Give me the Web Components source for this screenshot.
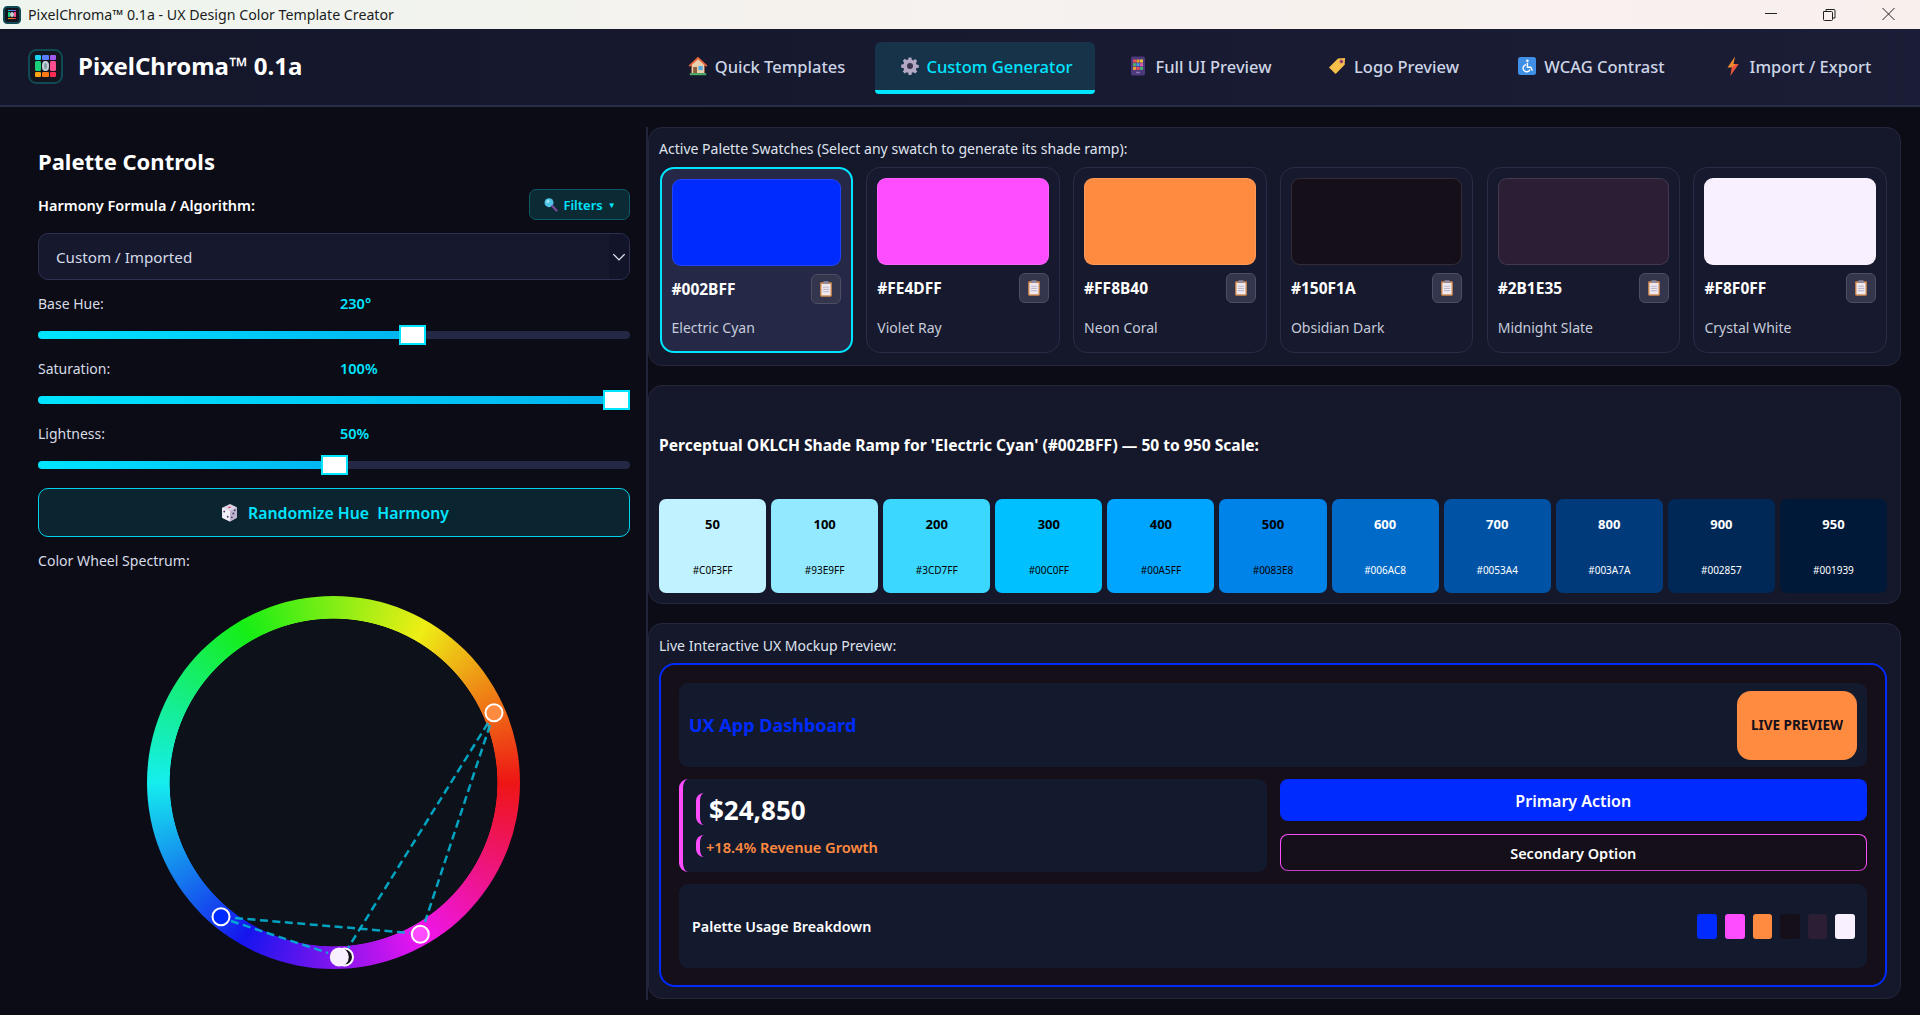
<!DOCTYPE html>
<html lang="en">
<head>
<meta charset="utf-8">
<title>PixelChroma 0.1a</title>
<style>
  html, body { margin: 0; height: 100%; background: #0b0c16; }
  body { font-family: "Noto Sans", "Open Sans", sans-serif; color: #fff; overflow: hidden; }
</style>
</head>
<body>
<pc-app></pc-app>
<script>
/** Inline SVG bodies for the small glyphs, all on a 20x20 box. */
const ICONS = {
  house: `<path d="M10 .8 .6 9.600l1.100 1.100L3.500 9.200V17.200h13V9.200l1.800 1.500 1.100-1.100z" fill="#e8663c"/><path d="M3.800 9 10 3.200 16.200 9v8.200H3.800z" fill="#e9cfae"/><rect x="5.200" y="11" width="3.800" height="6.200" fill="#8a5a3a"/><rect x="10.500" y="10" width="4.200" height="4.200" fill="#4fa8e0"/><rect x="1.800" y="17.200" width="16.400" height="2" fill="#46b36c"/>`,
  gear: `<path d="M8.600 1.500h2.800l.4 2.300 1.500.6 1.900-1.300 2 2-1.300 1.900.6 1.500 2.300.4v2.800l-2.300.4-.6 1.500 1.300 1.900-2 2-1.900-1.300-1.500.6-.4 2.300H8.600l-.4-2.300-1.500-.6-1.900 1.300-2-2 1.300-1.900-.6-1.500-2.300-.4V8.600l2.300-.4.6-1.500-1.300-1.900 2-2 1.900 1.300 1.500-.6z" fill="#b3a9c4"/><circle cx="10" cy="10" r="3" fill="#3a3550"/>`,
  phone: `<rect x="3" y=".5" width="14" height="19" rx="2" fill="#4c3a7c"/><g><rect x="5" y="3.500" width="3" height="3" fill="#ee4d5a"/><rect x="8.500" y="3.500" width="3" height="3" fill="#f0a030"/><rect x="12" y="3.500" width="3" height="3" fill="#e8c838"/><rect x="5" y="7.200" width="3" height="3" fill="#4caf6a"/><rect x="8.500" y="7.200" width="3" height="3" fill="#4898e8"/><rect x="12" y="7.200" width="3" height="3" fill="#d860b0"/><rect x="5" y="10.900" width="3" height="3" fill="#f0a030"/><rect x="8.500" y="10.900" width="3" height="3" fill="#ee4d5a"/><rect x="12" y="10.900" width="3" height="3" fill="#4caf6a"/></g><rect x="8" y="15.700" width="4" height="1.500" rx=".7" fill="#8c7cb8"/>`,
  tag: `<path d="M11 2.500 18 2l-.3 6.800L8.600 18 2 11.400z" fill="#f5c04a"/><circle cx="14.400" cy="5.400" r="2" fill="#d0607c"/><circle cx="14.400" cy="5.400" r="1" fill="#44365c"/>`,
  access: `<rect x="1" y="1" width="18" height="18" rx="2.500" fill="#3f8fe6"/><circle cx="10.400" cy="4.800" r="1.300" fill="#fff"/><path d="M10.400 6.800v4.400h3.400l1.600 3.400M9 8.600a3.600 3.600 0 1 0 4 5" fill="none" stroke="#fff" stroke-width="1.400"/>`,
  bolt: `<path d="M12 .5 4.500 11.500h4.500L7.500 19.500 15.500 8h-5z" fill="#f08a32"/><path d="M9 11.500 7.500 19.500 15.500 8h-2.500z" fill="#ef5040"/>`,
  search: `<circle cx="8" cy="7.500" r="6" fill="#4fc3e8"/><circle cx="6.500" cy="5.800" r="2" fill="#a4e6f8"/><path d="m12.500 12 5.500 6" stroke="#7a4a9c" stroke-width="3" stroke-linecap="round"/>`,
  dice: `<path d="M3 5.500 10.500 2 17 5v10l-6.500 3.500L3 15z" fill="#dcd4e6"/><path d="M3 5.500 10.500 8.500V18.500L3 15z" fill="#f3eff7"/><path d="M10.500 8.500 17 5v10l-6.500 3.500z" fill="#bdb3cc"/><ellipse cx="10" cy="5" rx="1.300" ry=".8" fill="#e04860"/><circle cx="5" cy="9" r=".9" fill="#4a3d70"/><circle cx="8.300" cy="14" r=".9" fill="#4a3d70"/><circle cx="15" cy="7.800" r=".9" fill="#4a3d70"/><circle cx="13.600" cy="11" r=".9" fill="#4a3d70"/><circle cx="12.200" cy="14.600" r=".9" fill="#4a3d70"/>`,
  clip: `<rect x="3.500" y="2.500" width="13" height="16" rx="1.200" fill="#d08a4e"/><rect x="5" y="4.500" width="10" height="12.500" fill="#efeaf2"/><rect x="7" y="1.500" width="6" height="3" rx=".8" fill="#8f8a9c"/><path d="M6.500 8h7M6.500 10.500h7M6.500 13h7" stroke="#b4aec0" stroke-width="1"/>`,
};

/**
 * Register a custom element whose shadow root is a fixed piece of markup.
 *
 * @param {string} tag - Custom element tag name.
 * @param {(el: HTMLElement) => string} html - Returns the shadow markup.
 */
function define(tag, html) {
  customElements.define(tag, class extends HTMLElement {
    connectedCallback() {
      if (this.shadowRoot) return;
      this.attachShadow({ mode: 'open' }).innerHTML = html(this);
    }
  });
}

define('pc-icon', el => {
  const size = el.getAttribute('size') || 20;
  return `<style>:host{display:inline-flex;flex:none}svg{display:block}</style>
  <svg width="${size}" height="${size}" viewBox="0 0 20 20">${ICONS[el.getAttribute('name')]}</svg>`;
});

define('pc-logo', el => {
  const size = el.getAttribute('size');
  const cells = ['#19d5f0', '#5b7dff', '#a45cf0', '#19d27a', '', '#ff4d8d', '#ffa414', '#ff7a14', '#ff2d55'];
  return `<style>
    :host{display:block;width:${size}px;height:${size}px;flex:none}
    .box{box-sizing:border-box;width:100%;height:100%;padding:14%;border-radius:24%;background:#15151f;border:2px solid #0f4a55;display:grid;grid-template-columns:repeat(3,1fr);gap:5%}
    i{border-radius:18%;display:block}
    .mid{background:#8aa0a8;border:2px solid #c4d2d8;box-sizing:border-box;border-radius:50%}
  </style>
  <div class="box">${cells.map(c => c ? `<i style="background:${c}"></i>` : '<i class="mid"></i>').join('')}</div>`;
});

define('pc-titlebar', () => `<style>
  :host{display:flex;align-items:center;height:29px;flex:none;background:linear-gradient(90deg,#eef5ee,#f5f2ee 40%,#f9f0ee);color:#1c1c1c;font:14.2px/29px "Noto Sans",sans-serif}
  pc-logo{margin:0 7px 0 3px}
  .ctl{margin-left:auto;display:flex}
  .ctl svg{display:block;width:58px;height:29px}
</style>
<pc-logo size="18"></pc-logo><span>PixelChroma™ 0.1a - UX Design Color Template Creator</span>
<div class="ctl">
  <svg viewBox="0 0 58 29"><path d="M19 13.500h12" stroke="#222" fill="none"/></svg>
  <svg viewBox="0 0 58 29"><path d="M19.500 11.500h8a1 1 0 0 1 1 1v7a1 1 0 0 1-1 1h-7a1 1 0 0 1-1-1zM22 11V9.500h8a1 1 0 0 1 1 1V18h-2" stroke="#222" fill="none"/></svg>
  <svg viewBox="0 0 58 29"><path d="M20.500 8l12 12m0-12-12 12" stroke="#222" fill="none"/></svg>
</div>`);

define('pc-tab', el => `<style>
  :host{display:flex;align-items:center;justify-content:center;gap:7px;width:${el.getAttribute('width')}px;height:52px;box-sizing:border-box;padding-bottom:4px;border-radius:6px 6px 4px 4px;font-size:16.5px;font-weight:500;color:#cdd5e6}
  :host([active]){background:#16334a;color:#00e5ff;border-bottom:4px solid #00e5ff;padding:0 0 0 2px}
</style><pc-icon name="${el.getAttribute('icon')}"></pc-icon><slot></slot>`);

define('pc-header', () => `<style>
  :host{display:flex;align-items:center;height:78px;flex:none;box-sizing:border-box;padding:0 27px 2px 28px;background:linear-gradient(90deg,#14162a,#1a1d35);border-bottom:2px solid #2a2b47}
  h1{margin:0 0 0 15px;font-size:24px;line-height:32px;font-weight:700}
  nav{margin:4px 0 0 auto;display:flex}
</style>
<pc-logo size="35"></pc-logo><h1>PixelChroma™ 0.1a</h1>
<nav>
  <pc-tab icon="house" width="217">Quick Templates</pc-tab>
  <pc-tab icon="gear" width="220" active>Custom Generator</pc-tab>
  <pc-tab icon="phone" width="210">Full UI Preview</pc-tab>
  <pc-tab icon="tag" width="176">Logo Preview</pc-tab>
  <pc-tab icon="access" width="220">WCAG Contrast</pc-tab>
  <pc-tab icon="bolt" width="192">Import / Export</pc-tab>
</nav>`);

define('pc-slider', el => {
  const v = el.getAttribute('fraction');
  return `<style>
    :host{display:block;margin-top:14px}
    .top{display:grid;grid-template-columns:302px 1fr;font-size:14px;line-height:20px;color:#d7dbe6}
    b{color:#00e5ff;font-weight:600;font-size:14.5px;margin-top:-1px}
    .row{display:flex;align-items:center;height:20px;margin-top:11px}
    .fill,.rest{height:8px}
    .fill{flex:${v} 1 0;background:linear-gradient(90deg,#00e5ff,#00b6f1);border-radius:4px 0 0 4px}
    .rest{flex:${1 - v} 1 0;background:#252845;border-radius:0 4px 4px 0}
    .thumb{flex:none;box-sizing:border-box;width:27px;height:20px;background:#fff;border:2px solid #00e5ff}
  </style>
  <div class="top"><span><slot></slot></span><b>${el.getAttribute('value')}</b></div>
  <div class="row"><div class="fill"></div><div class="thumb"></div><div class="rest"></div></div>`;
});

define('pc-wheel', () => `<style>
  :host{display:block;position:relative;width:373px;height:373px;margin:25px 0 0 109px}
  .ring{width:100%;height:100%;border-radius:50%;background:radial-gradient(circle,#0d1119 0 163.5px,transparent 164.2px),conic-gradient(from 90deg,#ee1515,#ee15ee,#1515ee,#15eeee,#15ee15,#eeee15,#ee1515)}
  svg{position:absolute;inset:0}
</style>
<div class="ring"></div>
<svg width="373" height="373" viewBox="147 596 373 373">
  <g stroke="#00b4d4" stroke-opacity=".9" stroke-width="2.500" stroke-dasharray="8 4.500" fill="none">
    <path d="M235 918 410 933"/><path d="M231 921 328 953"/><path d="M488 723 348 948"/><path d="M490 725 425 922"/>
  </g>
  <g stroke="#fff" stroke-width="2">
    <circle cx="494" cy="712.700" r="8.500" fill="#FF8B40"/>
    <circle cx="420.300" cy="934.300" r="8.500" fill="#FE4DFF"/>
    <circle cx="221" cy="916.700" r="8.500" fill="#002BFF"/>
    <circle cx="344.500" cy="957" r="8.500" fill="#150F1A"/>
    <circle cx="339.300" cy="957" r="8.500" fill="#F8F0FF" stroke="#F8F0FF"/>
  </g>
</svg>`);

define('pc-controls', () => `<style>
  :host{display:block;box-sizing:border-box;width:648px;height:873px;padding:19px 16px 0 38px;border-right:2px solid #23253d}
  h2{margin:0 0 13px;font-size:22px;line-height:30px;font-weight:700}
  .harmony{display:flex;align-items:center;justify-content:space-between;height:31px;font-size:14.5px;font-weight:600}
  .filters{display:flex;align-items:center;gap:5px;box-sizing:border-box;width:101px;height:31px;justify-content:center;background:#0b2a33;border:1px solid #0d5a66;border-radius:7px;color:#00e5ff;font-size:13px;font-weight:600}
  .select{display:flex;align-items:center;box-sizing:border-box;height:47px;margin:13px 0 0;padding-left:17px;background:#16192e;border:1px solid #2e3050;border-radius:10px;font-size:15.2px;color:#d5dae8;position:relative;overflow:hidden}
  .select svg{margin-left:auto;background:#12142a;width:20px;height:100%}
  .random{display:flex;align-items:center;justify-content:center;gap:8px;box-sizing:border-box;height:49px;margin-top:13px;background:#0b2530;border:1.5px solid #00d4ec;border-radius:10px;color:#00e5ff;font-size:15.8px;font-weight:600;white-space:pre}
  .lbl{margin-top:14px;font-size:14.1px;line-height:20px;color:#d7dbe6}
</style>
<h2>Palette Controls</h2>
<div class="harmony"><span>Harmony Formula / Algorithm:</span>
  <div class="filters"><pc-icon name="search" size="15"></pc-icon><span>Filters</span><span style="font-size:8px">▼</span></div></div>
<div class="select"><span>Custom / Imported</span><svg viewBox="0 0 20 47"><path d="m4 21 6 6 6-6" fill="none" stroke="#e0e4ee" stroke-width="1.400"/></svg></div>
<pc-slider value="230°" fraction="0.639">Base Hue:</pc-slider>
<pc-slider value="100%" fraction="1">Saturation:</pc-slider>
<pc-slider value="50%" fraction="0.5">Lightness:</pc-slider>
<div class="random"><pc-icon name="dice" size="21"></pc-icon><span>Randomize Hue  Harmony</span></div>
<div class="lbl">Color Wheel Spectrum:</div>
<pc-wheel></pc-wheel>`);

define('pc-card', () => `<style>
  :host{display:block;box-sizing:border-box;padding:11px 13px 11px 10px;background:#15172a;border:1px solid #25263c;border-radius:14px}
</style><slot></slot>`);

define('pc-swatch', el => `<style>
  :host{display:block;box-sizing:border-box;height:186px;padding:10px;background:#171a2e;border:1px solid #2a2c47;border-radius:14px}
  :host([active]){background:#252947;border:2px solid #00e5ff}
  :host([active]) .name{margin-top:14px}
  .color{height:87px;box-sizing:border-box;border-radius:9px;border:1px solid rgba(255,255,255,.12)}
  .row{display:flex;align-items:center;justify-content:space-between;margin-top:8px;height:30px;font-size:15.5px;font-weight:700}
  .copy{display:flex;align-items:center;justify-content:center;box-sizing:border-box;width:30px;height:30px;background:#33364d;border:1px solid #4c4e64;border-radius:6px}
  .name{margin-top:15px;font-size:14px;line-height:20px;color:#c6cbdb}
</style>
<div class="color" style="background:${el.getAttribute('color')}"></div>
<div class="row"><span>${el.getAttribute('color')}</span><div class="copy"><pc-icon name="clip" size="18"></pc-icon></div></div>
<div class="name"><slot></slot></div>`);

define('pc-shade', el => `<style>
  :host{display:flex;flex-direction:column;justify-content:space-between;align-items:center;box-sizing:border-box;height:94px;padding:16px 0;border-radius:7px;font-size:10px;line-height:14px;background:${el.getAttribute('color')};color:${el.getAttribute('ink')}}
  b{font-size:13px;line-height:18px;font-weight:700}
</style><b>${el.getAttribute('step')}</b><span>${el.getAttribute('color')}</span>`);

define('pc-mockup', () => `<style>
  :host{display:flex;flex-direction:column;gap:12px;box-sizing:border-box;margin-top:7px;height:324px;padding:18px 18px 17px 18px;background:#150F1A;border:2px solid #002BFF;border-radius:16px}
  .panel{background:#141a2e;border-radius:9px}
  .head{display:flex;align-items:center;justify-content:space-between;height:84px;box-sizing:border-box;padding:7px 10px}
  .head b{font-size:18px;color:#002BFF;font-weight:700}
  .live{display:flex;align-items:center;justify-content:center;width:120px;height:69px;border-radius:14px;background:#FF8B40;color:#150F1A;font-size:13.5px;font-weight:700}
  .row{display:grid;grid-template-columns:1fr 1fr;gap:13px;height:93px}
  .stats{box-sizing:border-box;padding:14px 0 0 13px;border-left:4px solid #FE4DFF;border-radius:9px}
  .num{display:block;width:max-content;height:32px;box-sizing:border-box;padding-left:9px;border-left:4px solid #FE4DFF;border-radius:8px;font-size:26px;line-height:34px;font-weight:700}
  .sub{display:block;width:max-content;height:22px;margin-top:10px;box-sizing:border-box;padding-left:6px;border-left:4px solid #FE4DFF;border-radius:8px;font-size:14.6px;line-height:24px;font-weight:600;color:#FF8B40}
  .btns{display:flex;flex-direction:column;gap:13px}
  .primary,.secondary{display:flex;align-items:center;justify-content:center;box-sizing:border-box;border-radius:8px;font-size:16px;font-weight:600}
  .primary{height:42px;background:#002BFF;padding-top:2px}
  .secondary{height:37px;border:1.5px solid #FE4DFF;border-bottom-color:#c93cc9;font-size:14.5px}
  .usage{display:flex;align-items:center;justify-content:space-between;height:84px;box-sizing:border-box;padding:0 12px 0 13px;font-size:14.3px;font-weight:600}
  .chips{display:flex;gap:8px}
  .chips i{display:block;width:19.6px;height:25px;border-radius:3px}
</style>
<div class="panel head"><b>UX App Dashboard</b><div class="live">LIVE PREVIEW</div></div>
<div class="row">
  <div class="panel stats"><span class="num">$24,850</span><span class="sub">+18.4% Revenue Growth</span></div>
  <div class="btns"><div class="primary">Primary Action</div><div class="secondary">Secondary Option</div></div>
</div>
<div class="panel usage"><span>Palette Usage Breakdown</span>
  <div class="chips"><i style="background:#002BFF"></i><i style="background:#FE4DFF"></i><i style="background:#FF8B40"></i><i style="background:#150F1A"></i><i style="background:#2B1E35"></i><i style="background:#F8F0FF"></i></div>
</div>`);

const SHADES = [
  [50, '#C0F3FF'], [100, '#93E9FF'], [200, '#3CD7FF'], [300, '#00C0FF'], [400, '#00A5FF'], [500, '#0083E8'],
  [600, '#006AC8'], [700, '#0053A4'], [800, '#003A7A'], [900, '#002857'], [950, '#001939'],
];

define('pc-app', () => `<style>
  :host{display:flex;flex-direction:column;height:1015px}
  main{display:flex;padding-top:20px;background:#0b0c16}
  .right{flex:1;display:flex;flex-direction:column;gap:19px;padding-right:19px}
  .lbl{font-size:14.05px;line-height:20px;color:#dfe3ee}
  .swatches{display:grid;grid-template-columns:repeat(6,1fr);gap:13.3px;margin-top:8px;padding-left:.5px}
  .swatch-card{padding-bottom:12px}
  .ramp-card{height:219px}
  .mock-card{padding-top:12px}
  h3{margin:37px 0 43px;font-size:15.6px;line-height:22px;font-weight:700}
  .ramp{display:grid;grid-template-columns:repeat(11,1fr);gap:5px}
</style>
<pc-titlebar></pc-titlebar>
<pc-header></pc-header>
<main>
  <pc-controls></pc-controls>
  <div class="right">
    <pc-card class="swatch-card">
      <div class="lbl">Active Palette Swatches (Select any swatch to generate its shade ramp):</div>
      <div class="swatches">
        <pc-swatch color="#002BFF" active>Electric Cyan</pc-swatch>
        <pc-swatch color="#FE4DFF">Violet Ray</pc-swatch>
        <pc-swatch color="#FF8B40">Neon Coral</pc-swatch>
        <pc-swatch color="#150F1A">Obsidian Dark</pc-swatch>
        <pc-swatch color="#2B1E35">Midnight Slate</pc-swatch>
        <pc-swatch color="#F8F0FF">Crystal White</pc-swatch>
      </div>
    </pc-card>
    <pc-card class="ramp-card">
      <h3>Perceptual OKLCH Shade Ramp for 'Electric Cyan' (#002BFF) — 50 to 950 Scale:</h3>
      <div class="ramp">${SHADES.map(([step, color]) => `<pc-shade step="${step}" color="${color}" ink="${step <= 500 ? '#000' : '#fff'}"></pc-shade>`).join('')}</div>
    </pc-card>
    <pc-card class="mock-card">
      <div class="lbl">Live Interactive UX Mockup Preview:</div>
      <pc-mockup></pc-mockup>
    </pc-card>
  </div>
</main>`);
</script>
</body>
</html>
